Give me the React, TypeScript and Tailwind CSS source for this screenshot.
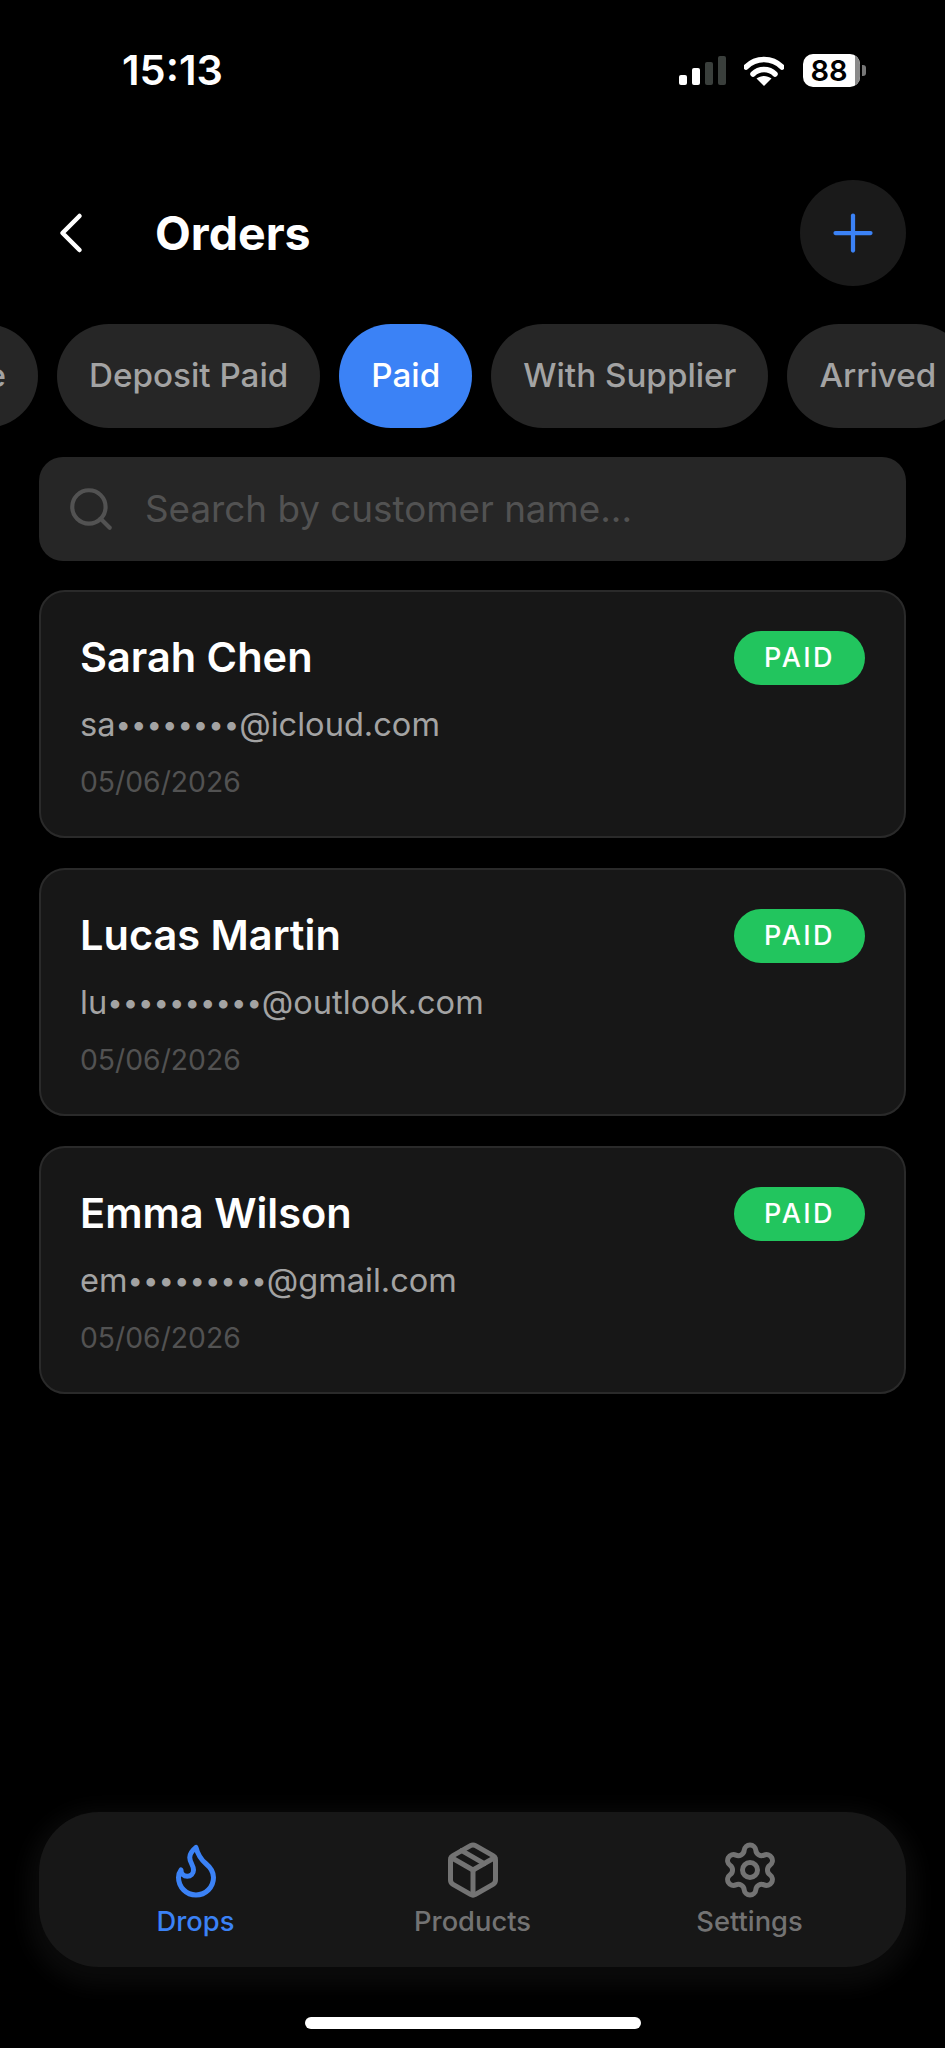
import { ChevronLeft, Flame, Package, Plus, Search, Settings } from "lucide-react";

const TABS = ["Active", "Deposit Paid", "Paid", "With Supplier", "Arrived"];

const ORDERS = [
  { name: "Sarah Chen", head: "sa", dots: "••••••••", tail: "@icloud.com", date: "05/06/2026" },
  { name: "Lucas Martin", head: "lu", dots: "••••••••••", tail: "@outlook.com", date: "05/06/2026" },
  { name: "Emma Wilson", head: "em", dots: "•••••••••", tail: "@gmail.com", date: "05/06/2026" },
];

function StatusBar() {
  return (
    <div className="flex h-[141px] shrink-0 items-center justify-between pl-[122px] pr-[79px]">
      <span className="text-[41.5px] font-semibold leading-none text-white">15:13</span>
      <div className="flex items-center">
        <div className="flex h-[29px] items-end gap-[5px]">
          <div className="h-[10px] w-[8px] rounded-[2px] bg-white" />
          <div className="h-[17px] w-[8px] rounded-[2px] bg-white" />
          <div className="h-[23px] w-[8px] rounded-[2px] bg-[#3a3f3c]" />
          <div className="h-[29px] w-[8px] rounded-[2px] bg-[#3a3f3c]" />
        </div>
        <svg width="40" height="30" viewBox="0 0 40 30" className="ml-[18px]" fill="none">
          <path d="M2 11 C12 1 28 1 38 11" stroke="#fff" strokeWidth="5.5" strokeLinecap="round" />
          <path d="M9 18 C15 12 25 12 31 18" stroke="#fff" strokeWidth="5.5" strokeLinecap="round" />
          <path d="M20 30 L12.5 22.5 C17 19 23 19 27.5 22.5 Z" fill="#fff" />
        </svg>
        <div className="ml-[19px] flex items-center">
          <div className="flex h-[33px] w-[57px] items-center overflow-hidden rounded-[10px] bg-white">
            <span className="flex-1 text-center text-[29px] font-semibold leading-none text-black">88</span>
            <div className="h-full w-[5px] bg-[#8a8a8a]" />
          </div>
          <div className="ml-[2px] h-[11px] w-[4px] rounded-r-[3px] bg-[#777]" />
        </div>
      </div>
    </div>
  );
}

type Order = (typeof ORDERS)[number];

function OrderCard({ name, head, dots, tail, date }: Order) {
  return (
    <div className="rounded-[26px] border-2 border-[#2a2a2a] bg-[#171717] px-[39px] pb-[36px] pt-[39px]">
      <div className="flex h-[54px] items-center justify-between">
        <span className="text-[41.5px] font-semibold leading-none text-white">{name}</span>
        <span className="flex h-[54px] w-[131px] items-center justify-center rounded-full bg-[#22c55e] text-[27px] font-medium tracking-[2.4px] text-white">
          PAID
        </span>
      </div>
      <div className="mt-[17px] text-[32.6px] leading-[44px] text-[#a3a3a3]">
        {head}
        <span className="relative top-[-2px] text-[27.5px] leading-none">{dots}</span>
        {tail}
      </div>
      <div className="mt-[18px] text-[28.3px] leading-[36px] text-[#525252]">{date}</div>
    </div>
  );
}

function NavItem({ label, active, children }: { label: string; active?: boolean; children: React.ReactNode }) {
  return (
    <div className={`flex flex-1 flex-col items-center ${active ? "text-[#3b82f6]" : "text-[#737373]"}`}>
      {children}
      <span className="mt-[4px] text-[27.3px] font-medium leading-[36px]">{label}</span>
    </div>
  );
}

export default function App() {
  return (
    <div className="flex h-[2048px] w-[945px] flex-col overflow-hidden bg-black font-['Inter',sans-serif]">
      <StatusBar />

      {/* header */}
      <div className="mt-[39px] flex h-[106px] shrink-0 items-center justify-between pl-[37px] pr-[39px]">
        <div className="flex items-center">
          <ChevronLeft size={68} strokeWidth={1.6} className="text-white" />
          <h1 className="ml-[50px] text-[46.5px] font-bold leading-none text-white">Orders</h1>
        </div>
        <button className="flex h-[106px] w-[106px] items-center justify-center rounded-full bg-[#1a1a1a]">
          <Plus size={60} strokeWidth={1.7} className="text-[#3b82f6]" />
        </button>
      </div>

      {/* status tabs, scrolled sideways */}
      <div className="mt-[38px] shrink-0 overflow-hidden">
        <div className="ml-[-126px] flex gap-[19px]">
          {TABS.map((tab) => (
            <div
              key={tab}
              className={`flex h-[104px] shrink-0 items-center rounded-full px-[32px] text-[33.2px] font-medium ${
                tab === "Paid" ? "bg-[#3b82f6] text-white" : "bg-[#262626] text-[#a3a3a3]"
              }`}
            >
              {tab}
            </div>
          ))}
        </div>
      </div>

      {/* search */}
      <div className="mx-[39px] mt-[29px] flex h-[104px] shrink-0 items-center rounded-[24px] bg-[#262626] pl-[27px]">
        <Search size={50} strokeWidth={2} className="text-[#525252]" />
        <span className="ml-[29px] text-[36.8px] text-[#525252]">Search by customer name...</span>
      </div>

      <div className="mx-[39px] mt-[29px] flex flex-col gap-[30px]">
        {ORDERS.map((order) => (
          <OrderCard key={order.name} {...order} />
        ))}
      </div>

      {/* tab bar */}
      <div className="mx-[39px] mt-auto flex h-[155px] shrink-0 items-center rounded-[60px] bg-[#171717] px-[18px] shadow-[0_8px_20px_12px_rgba(255,255,255,0.04)]">
        <NavItem label="Drops" active>
          <Flame size={60} strokeWidth={2} />
        </NavItem>
        <NavItem label="Products">
          <Package size={60} strokeWidth={2} />
        </NavItem>
        <NavItem label="Settings">
          <Settings size={60} strokeWidth={2} />
        </NavItem>
      </div>

      <div className="mb-[19px] mt-[50px] flex shrink-0 justify-center">
        <div className="h-[12px] w-[336px] rounded-full bg-white" />
      </div>
    </div>
  );
}
